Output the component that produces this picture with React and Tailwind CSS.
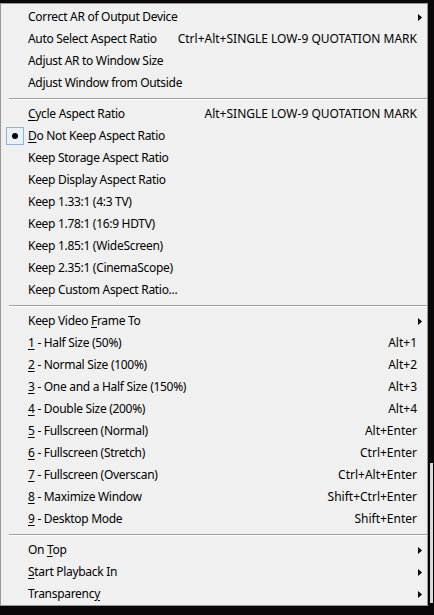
import React from "react"

const Arrow = () => (
  <svg width="4" height="7" viewBox="0 0 4 7" className="block">
    <path d="M0 0 L4 3.5 L0 7 Z" fill="#000" />
  </svg>
)

const U = ({ children }) => <span className="underline underline-offset-2">{children}</span>

const groups = [
  [
    { label: "Correct AR of Output Device", sub: true },
    { label: "Auto Select Aspect Ratio", key: "Ctrl+Alt+SINGLE LOW-9 QUOTATION MARK" },
    { label: "Adjust AR to Window Size" },
    { label: "Adjust Window from Outside" },
  ],
  [
    { label: <><U>C</U>ycle Aspect Ratio</>, key: "Alt+SINGLE LOW-9 QUOTATION MARK" },
    { label: <><U>D</U>o Not Keep Aspect Ratio</>, checked: true },
    { label: "Keep Storage Aspect Ratio" },
    { label: "Keep Display Aspect Ratio" },
    { label: "Keep 1.33:1 (4:3 TV)" },
    { label: "Keep 1.78:1 (16:9 HDTV)" },
    { label: "Keep 1.85:1 (WideScreen)" },
    { label: "Keep 2.35:1 (CinemaScope)" },
    { label: "Keep Custom Aspect Ratio..." },
  ],
  [
    { label: <>Keep Video <U>F</U>rame To</>, sub: true },
    { label: <><U>1</U> - Half Size (50%)</>, key: "Alt+1" },
    { label: <><U>2</U> - Normal Size (100%)</>, key: "Alt+2" },
    { label: <><U>3</U> - One and a Half Size (150%)</>, key: "Alt+3" },
    { label: <><U>4</U> - Double Size (200%)</>, key: "Alt+4" },
    { label: <><U>5</U> - Fullscreen (Normal)</>, key: "Alt+Enter" },
    { label: <><U>6</U> - Fullscreen (Stretch)</>, key: "Ctrl+Enter" },
    { label: <><U>7</U> - Fullscreen (Overscan)</>, key: "Ctrl+Alt+Enter" },
    { label: <><U>8</U> - Maximize Window</>, key: "Shift+Ctrl+Enter" },
    { label: <><U>9</U> - Desktop Mode</>, key: "Shift+Enter" },
  ],
  [
    { label: <>On <U>T</U>op</>, sub: true },
    { label: <><U>S</U>tart Playback In</>, sub: true },
    { label: <>Transparenc<U>y</U></>, sub: true },
  ],
]

const Item = ({ item }) => (
  <div className="flex items-center h-[22px] pl-[1px] pr-[5px]">
    <div className="w-[26px] flex items-center justify-start pl-[4px]">
      {item.checked && (
        <div className="w-[18px] h-[18px] border border-[#8fb3dc] bg-[#e8f0f8] flex items-center justify-center">
          <div className="w-[6px] h-[6px] rounded-full bg-black" />
        </div>
      )}
    </div>
    <div className="flex-1 whitespace-nowrap tracking-[-0.3px]">{item.label}</div>
    {item.key && <div className="whitespace-nowrap pr-[5px]">{item.key}</div>}
    {item.sub && (
      <div>
        <Arrow />
      </div>
    )}
  </div>
)

export default function App() {
  return (
    <div className="w-[434px] h-[615px] bg-[#0a0708] pt-[3px] flex overflow-hidden">
      <div
        className="w-[428px] h-[603px] bg-[#f0f0f0] border border-[#979797] pt-[2px] text-[12px] text-[#000] leading-none"
        style={{ fontFamily: '"Segoe UI", "Noto Sans", sans-serif' }}
      >
        {groups.map((g, gi) => (
          <div key={gi}>
            {gi > 0 && (
              <div className="h-[9px] flex flex-col justify-center pl-[8px]">
                <div className="h-px bg-[#a0a0a0]" />
                <div className="h-px bg-white" />
              </div>
            )}
            {g.map((item, i) => (
              <Item key={i} item={item} />
            ))}
          </div>
        ))}
      </div>
      <div className="flex-1 flex flex-col justify-end pb-[12px]">
        <div className="h-[140px] w-[3px] bg-[#d8d8d8] ml-[2px]" />
      </div>
    </div>
  )
}
